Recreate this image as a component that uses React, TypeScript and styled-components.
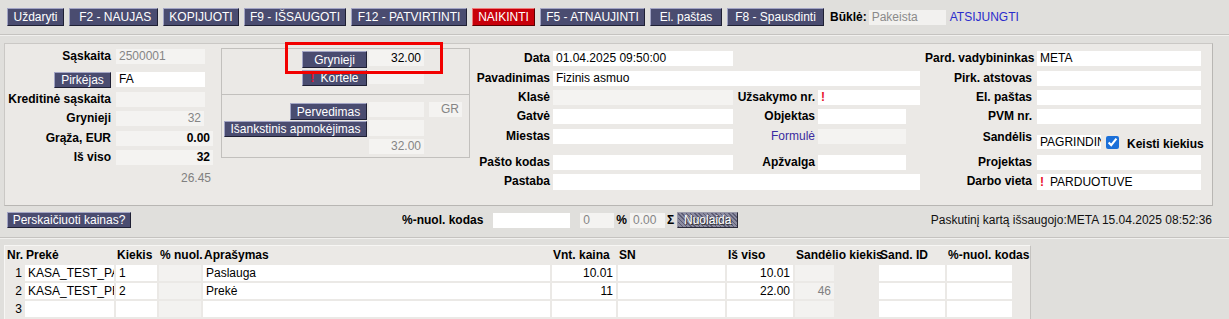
import React from "react";
import styled, { createGlobalStyle, css } from "styled-components";

const GlobalStyle = createGlobalStyle`
  html, body { margin: 0; padding: 0; overflow: hidden; }
  body {
    background: #e0dfdc;
    font-family: "Liberation Sans", Arial, sans-serif;
    font-size: 12px;
    color: #000;
  }
`;

/* ---------- buttons ---------- */
const Button = styled.button<{ $w: number; $h?: number; $danger?: boolean; $mt?: number }>`
  box-sizing: border-box;
  flex-shrink: 0;
  width: ${(p) => p.$w}px;
  height: ${(p) => p.$h ?? 18}px;
  margin: ${(p) => p.$mt ?? 0}px 0 0 0;
  padding: 0;
  font-family: "Liberation Sans", Arial, sans-serif;
  font-size: 12px;
  line-height: 1;
  color: #fff;
  white-space: nowrap;
  overflow: hidden;
  cursor: pointer;
  border: 1px solid;
  ${(p) =>
    p.$danger
      ? css`
          background: #c8000a;
          border-color: #ee7a7a #5a0000 #5a0000 #ee7a7a;
        `
      : css`
          background: #4a4c70;
          border-color: #a2a4c4 #1e1f33 #1e1f33 #a2a4c4;
        `}
`;

const HatchButton = styled.button`
  box-sizing: border-box;
  width: 61px;
  height: 16px;
  padding: 0;
  font-family: "Liberation Sans", Arial, sans-serif;
  font-size: 12px;
  line-height: 1;
  color: #fff;
  text-shadow: 1px 1px 0 #333;
  border: 1px solid;
  border-color: #9a9aaa #2a2a38 #2a2a38 #9a9aaa;
  background: repeating-linear-gradient(45deg, #5c5c74 0px, #5c5c74 1px, #8c8ca0 1px, #8c8ca0 3px);
`;

const Bang = styled.span`
  color: #e8102a;
  font-weight: bold;
  margin-right: 6px;
`;

/* ---------- toolbar ---------- */
const Toolbar = styled.div`
  display: flex;
  align-items: center;
  gap: 5px;
  height: 18px;
  padding: 8px 7px;
  border-bottom: 1px solid #c5c3c0;
  box-shadow: 0 1px 0 #f1f0ee;
`;

const StatusLabel = styled.span`
  font-weight: bold;
  margin-left: 1px;
`;

const StatusField = styled.div`
  box-sizing: border-box;
  width: 77px;
  height: 15px;
  line-height: 15px;
  padding: 0 3px;
  margin-left: -3px;
  background: #f2f1ef;
  color: #8a8a8a;
`;

const Link = styled.span`
  color: #2a2ccc;
  margin-left: -1px;
`;

/* ---------- generic fields ---------- */
const Field = styled.div<{
  $w: number;
  $h?: number;
  $ro?: boolean;
  $right?: boolean;
  $bold?: boolean;
  $muted?: boolean;
  $mt?: number;
}>`
  box-sizing: border-box;
  flex-shrink: 0;
  width: ${(p) => p.$w}px;
  height: ${(p) => p.$h ?? 15}px;
  line-height: ${(p) => p.$h ?? 15}px;
  margin-top: ${(p) => p.$mt ?? 0}px;
  padding: 0 3px;
  background: ${(p) => (p.$ro ? "#f4f3f1" : "#fff")};
  color: ${(p) => (p.$muted ? "#858585" : "#000")};
  font-weight: ${(p) => (p.$bold ? "bold" : "normal")};
  text-align: ${(p) => (p.$right ? "right" : "left")};
  white-space: nowrap;
  overflow: hidden;
`;

const Label = styled.div<{ $link?: boolean }>`
  font-weight: ${(p) => (p.$link ? "normal" : "bold")};
  color: ${(p) => (p.$link ? "#3a2ba0" : "#000")};
  text-align: right;
  line-height: 15px;
  white-space: nowrap;
`;

/* ---------- main panel ---------- */
const Panel = styled.div`
  box-sizing: border-box;
  display: flex;
  align-items: flex-start;
  margin: 8px 0 0 4px;
  width: 1209px;
  height: 163px;
  background: #ebe9e6;
  border: 1px solid #cac8c5;
  border-right-color: #b8b6b3;
  border-bottom-color: #b8b6b3;
`;

const LeftCol = styled.div`
  width: 208px;
  padding-top: 5px;
  display: flex;
  flex-direction: column;
`;

const LeftRow = styled.div<{ $h: number }>`
  display: flex;
  align-items: flex-start;
  gap: 5px;
  height: ${(p) => p.$h}px;
  & > ${Label} {
    width: 106px;
    flex-shrink: 0;
  }
`;

const ButtonSlot = styled.div`
  width: 106px;
  flex-shrink: 0;
  display: flex;
  justify-content: flex-end;
`;

const Note = styled.div`
  width: 206px;
  text-align: right;
  color: #808080;
  line-height: 15px;
  padding-top: 1px;
`;

const PayBox = styled.div`
  position: relative;
  box-sizing: border-box;
  width: 249px;
  margin: 4px 0 0 8px;
  border: 1px solid #c2c0bd;
`;

const BoxSection = styled.div<{ $pt: number; $pb: number; $divider?: boolean }>`
  display: flex;
  flex-direction: column;
  padding: ${(p) => p.$pt}px 0 ${(p) => p.$pb}px;
  ${(p) =>
    p.$divider &&
    css`
      border-bottom: 1px solid #c2c0bd;
    `}
`;

const BoxRow = styled.div<{ $h: number }>`
  display: flex;
  align-items: flex-start;
  height: ${(p) => p.$h}px;
`;

const BoxButtonSlot = styled.div`
  width: 145px;
  margin-right: 2px;
  display: flex;
  justify-content: flex-end;
`;

const Highlight = styled.div`
  position: absolute;
  left: 63px;
  top: -7px;
  width: 158px;
  height: 32px;
  box-sizing: border-box;
  border: 3px solid #f20000;
  pointer-events: none;
`;

const FormGrid = styled.div<{ $cols: string; $gap: number; $ml: number }>`
  display: grid;
  grid-template-columns: ${(p) => p.$cols};
  grid-template-rows: 20px 19px 19px 20px 26px 19px 16px;
  column-gap: ${(p) => p.$gap}px;
  margin: 7px 0 0 ${(p) => p.$ml}px;
  align-items: start;
`;

const Wide = styled.div`
  grid-column: 2 / 5;
`;

const Skip = styled.div<{ $span: number }>`
  grid-column: span ${(p) => p.$span};
`;

const StoreRow = styled.div`
  display: flex;
  align-items: flex-end;
  height: 16px;
  padding-top: 4px;
  white-space: nowrap;
`;

const Check = styled.input`
  flex-shrink: 0;
  width: 13px;
  height: 13px;
  margin: 0 8px 0 5px;
  accent-color: #1b6fd8;
`;

const CheckLabel = styled.span`
  flex-shrink: 0;
  font-weight: bold;
  line-height: 13px;
  margin-bottom: -2px;
`;

/* ---------- discount bar ---------- */
const Bar = styled.div`
  display: flex;
  align-items: center;
  height: 16px;
  padding: 6px 17px 9px 7px;
  border-bottom: 1px solid #c5c3c0;
  box-shadow: 0 1px 0 #f1f0ee;
`;

const DiscountGroup = styled.div`
  display: flex;
  align-items: center;
  margin-left: 271px;
`;

const BarLabel = styled.span<{ $ml?: number; $mr?: number }>`
  font-weight: bold;
  margin: 0 ${(p) => p.$mr ?? 0}px 0 ${(p) => p.$ml ?? 0}px;
`;

const SavedInfo = styled.div`
  margin-left: auto;
  color: #111;
`;

/* ---------- rows table ---------- */
const TableWrap = styled.div`
  box-sizing: border-box;
  width: 1027px;
  margin: 7px 0 0 4px;
  padding: 2px 0 0 1px;
  background: #ebe9e6;
  border-top: 1px solid #f7f6f4;
  border-left: 1px solid #f7f6f4;
  border-right: 1px solid #c5c3c0;
`;

const Grid = styled.div`
  display: grid;
  grid-template-columns: 17px 89px 41px 42px 347px 64px 107px 66px 39px 41px 66px 65px;
  grid-auto-rows: 16px;
  grid-template-rows: 15px;
  gap: 2px;
`;

const Head = styled.div`
  font-weight: bold;
  line-height: 15px;
  padding-left: 1px;
  white-space: nowrap;
`;

const Cell = styled.div<{ $tone: "white" | "grey" | "none"; $right?: boolean; $muted?: boolean }>`
  box-sizing: border-box;
  height: 16px;
  line-height: 16px;
  padding: 0 3px;
  background: ${(p) => (p.$tone === "white" ? "#fff" : p.$tone === "grey" ? "#f3f2f0" : "transparent")};
  text-align: ${(p) => (p.$right ? "right" : "left")};
  color: ${(p) => (p.$muted ? "#808080" : "#000")};
  white-space: nowrap;
  overflow: hidden;
`;

const NrCell = styled(Cell)`
  padding: 0 1px 0 0;
`;

const headers = [
  "Nr.",
  "Prekė",
  "Kiekis",
  "% nuol.",
  "Aprašymas",
  "Vnt. kaina",
  "SN",
  "Iš viso",
  "Sandėlio kiekis",
  "",
  "Sand. ID",
  "%-nuol. kodas",
];

const rows = [
  { nr: "1", preke: "KASA_TEST_PASLAUGA", kiekis: "1", apr: "Paslauga", kaina: "10.01", viso: "10.01", sand: "" },
  { nr: "2", preke: "KASA_TEST_PREKE", kiekis: "2", apr: "Prekė", kaina: "11", viso: "22.00", sand: "46" },
  { nr: "3", preke: "", kiekis: "", apr: "", kaina: "", viso: "", sand: "" },
  { nr: "4", preke: "", kiekis: "", apr: "", kaina: "", viso: "", sand: "" },
];

export default function App() {
  return (
    <>
      <GlobalStyle />
      <Toolbar>
        <Button $w={57}>Uždaryti</Button>
        <Button $w={89}>&nbsp;F2 - NAUJAS</Button>
        <Button $w={76}>KOPIJUOTI</Button>
        <Button $w={102}>F9 - IŠSAUGOTI</Button>
        <Button $w={116}>F12 - PATVIRTINTI</Button>
        <Button $w={63} $danger>
          NAIKINTI
        </Button>
        <Button $w={105}>F5 - ATNAUJINTI</Button>
        <Button $w={72}>El. paštas</Button>
        <Button $w={97}>F8 - Spausdinti</Button>
        <StatusLabel>Būklė:</StatusLabel>
        <StatusField>Pakeista</StatusField>
        <Link>ATSIJUNGTI</Link>
      </Toolbar>

      <Panel>
        <LeftCol>
          <LeftRow $h={23}>
            <Label>Sąskaita</Label>
            <Field $w={89} $ro $muted>
              2500001
            </Field>
          </LeftRow>
          <LeftRow $h={20}>
            <ButtonSlot>
              <Button $w={57} $h={16}>
                Pirkėjas
              </Button>
            </ButtonSlot>
            <Field $w={89}>FA</Field>
          </LeftRow>
          <LeftRow $h={19}>
            <Label>Kreditinė sąskaita</Label>
            <Field $w={89} $ro />
          </LeftRow>
          <LeftRow $h={20}>
            <Label>Grynieji</Label>
            <Field $w={88} $ro $muted $right>
              32
            </Field>
          </LeftRow>
          <LeftRow $h={19}>
            <Label>Grąža, EUR</Label>
            <Field $w={97} $ro $bold $right>
              0.00
            </Field>
          </LeftRow>
          <LeftRow $h={20}>
            <Label>Iš viso</Label>
            <Field $w={97} $ro $bold $right>
              32
            </Field>
          </LeftRow>
          <Note>26.45</Note>
        </LeftCol>

        <PayBox>
          <BoxSection $pt={1} $pb={8} $divider>
            <BoxRow $h={20}>
              <BoxButtonSlot>
                <Button $w={65} $h={17} $mt={1}>
                  Grynieji
                </Button>
              </BoxButtonSlot>
              <Field $w={55} $h={16} $ro $right>
                32.00
              </Field>
            </BoxRow>
            <BoxRow $h={16}>
              <BoxButtonSlot>
                <Button $w={65} $h={16}>
                  <Bang>!</Bang>Kortelė
                </Button>
              </BoxButtonSlot>
              <Field $w={55} $h={14} $ro />
            </BoxRow>
          </BoxSection>
          <BoxSection $pt={7} $pb={2}>
            <BoxRow $h={18}>
              <BoxButtonSlot>
                <Button $w={77} $h={17} $mt={1}>
                  Pervedimas
                </Button>
              </BoxButtonSlot>
              <Field $w={55} $ro />
              <Field $w={33} $ro $muted $right style={{ marginLeft: 5 }}>
                GR
              </Field>
            </BoxRow>
            <BoxRow $h={19}>
              <BoxButtonSlot>
                <Button $w={143} $h={16} $mt={1}>
                  Išankstinis apmokėjimas
                </Button>
              </BoxButtonSlot>
              <Field $w={55} $h={16} $ro />
            </BoxRow>
            <BoxRow $h={16}>
              <BoxButtonSlot />
              <Field $w={55} $ro $muted $right>
                32.00
              </Field>
            </BoxRow>
          </BoxSection>
          <Highlight />
        </PayBox>

        <FormGrid $cols="80px 180px 79px 102px" $gap={3} $ml={0}>
          <Label>Data</Label>
          <Field $w={180}>01.04.2025 09:50:00</Field>
          <Skip $span={2} />

          <Label>Pavadinimas</Label>
          <Wide>
            <Field $w={367}>Fizinis asmuo</Field>
          </Wide>

          <Label>Klasė</Label>
          <Field $w={180} $ro />
          <Label>Užsakymo nr.</Label>
          <Field $w={102}>
            <Bang>!</Bang>
          </Field>

          <Label>Gatvė</Label>
          <Field $w={180} />
          <Label>Objektas</Label>
          <Field $w={88} />

          <Label>Miestas</Label>
          <Field $w={180} />
          <Label $link>Formulė</Label>
          <Field $w={88} $ro />

          <Label>Pašto kodas</Label>
          <Field $w={180} />
          <Label>Apžvalga</Label>
          <Field $w={88} />

          <Label>Pastaba</Label>
          <Wide>
            <Field $w={367} $h={16} />
          </Wide>
        </FormGrid>

        <FormGrid $cols="107px 164px" $gap={5} $ml={5}>
          <Label>Pard. vadybininkas</Label>
          <Field $w={164}>META</Field>

          <Label>Pirk. atstovas</Label>
          <Field $w={164} />

          <Label>El. paštas</Label>
          <Field $w={164} />

          <Label>PVM nr.</Label>
          <Field $w={164} />

          <Label style={{ marginTop: 1 }}>Sandėlis</Label>
          <StoreRow>
            <Field $w={64} $h={14}>
              PAGRINDINIS
            </Field>
            <Check type="checkbox" checked readOnly />
            <CheckLabel>Keisti kiekius</CheckLabel>
          </StoreRow>

          <Label>Projektas</Label>
          <Field $w={164} />

          <Label>Darbo vieta</Label>
          <Field $w={164} $h={16}>
            <Bang>!</Bang>PARDUOTUVE
          </Field>
        </FormGrid>
      </Panel>

      <Bar>
        <Button $w={124} $h={16}>
          Perskaičiuoti kainas?
        </Button>
        <DiscountGroup>
          <BarLabel $mr={10}>%-nuol. kodas</BarLabel>
          <Field $w={77}>{""}</Field>
          <Field $w={34} $ro $muted style={{ marginLeft: 10 }}>
            0
          </Field>
          <BarLabel $ml={2} $mr={3}>
            %
          </BarLabel>
          <Field $w={35} $ro $muted>
            0.00
          </Field>
          <BarLabel $ml={2} $mr={3}>
            Σ
          </BarLabel>
          <HatchButton>Nuolaida</HatchButton>
        </DiscountGroup>
        <SavedInfo>Paskutinį kartą išsaugojo:META 15.04.2025 08:52:36</SavedInfo>
      </Bar>

      <TableWrap>
        <Grid>
          {headers.map((h, i) => (
            <Head key={"h" + i}>{h}</Head>
          ))}
          {rows.map((r) => (
            <React.Fragment key={r.nr}>
              <NrCell $tone="none" $right>
                {r.nr}
              </NrCell>
              <Cell $tone="white">{r.preke}</Cell>
              <Cell $tone="white">{r.kiekis}</Cell>
              <Cell $tone="grey" />
              <Cell $tone="white">{r.apr}</Cell>
              <Cell $tone="white" $right>
                {r.kaina}
              </Cell>
              <Cell $tone="white" />
              <Cell $tone="white" $right>
                {r.viso}
              </Cell>
              <Cell $tone="grey" $right $muted>
                {r.sand}
              </Cell>
              <Cell $tone="none" />
              <Cell $tone="white" />
              <Cell $tone="white" />
            </React.Fragment>
          ))}
        </Grid>
      </TableWrap>
    </>
  );
}
